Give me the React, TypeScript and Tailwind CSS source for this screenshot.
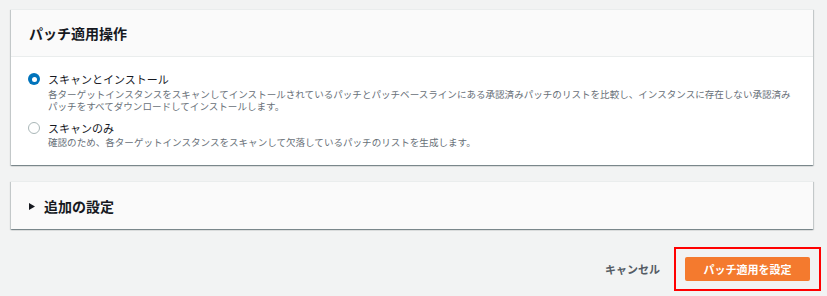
import React from "react";

const font = { fontFamily: '"Noto Sans CJK JP", "Noto Sans", sans-serif' };

function Radio({ checked }: { checked: boolean }) {
  return checked ? (
    <span className="mt-[1px] flex h-[12px] w-[12px] shrink-0 items-center justify-center rounded-full bg-[#0073bb]">
      <span className="h-[5px] w-[5px] rounded-full bg-white" />
    </span>
  ) : (
    <span className="mt-[1px] h-[12px] w-[12px] shrink-0 rounded-full border border-[#aab7b8] bg-white" />
  );
}

const cardShadow =
  "shadow-[0_1px_1px_0_rgba(0,28,36,0.3),1px_1px_1px_0_rgba(0,28,36,0.15),-1px_1px_1px_0_rgba(0,28,36,0.15)]";

export default function App() {
  return (
    <div
      className="h-[296px] w-[827px] bg-[#f2f3f3] pl-[11px] pt-[9px] text-[#16191f]"
      style={font}
    >
      <div className={`mr-[14px] bg-white ${cardShadow} border-t border-[#eaeded]`}>
        <div className="flex h-[47px] items-center border-b border-[#eaeded] bg-[#fafafa] pl-[18px]">
          <h2 className="text-[14px] font-bold leading-[20px]">パッチ適用操作</h2>
        </div>
        <div className="flex flex-col gap-[9px] pb-[17px] pl-[17px] pr-[18px] pt-[15px]">
          <div className="flex items-start gap-[8px]">
            <Radio checked />
            <div className="flex flex-col">
              <span className="text-[11px] leading-[14px]">スキャンとインストール</span>
              <span className="mt-[2px] text-[9.55px] leading-[12px] text-[#687078]">
                各ターゲットインスタンスをスキャンしてインストールされているパッチとパッチベースラインにある承認済みパッチのリストを比較し、インスタンスに存在しない承認済みパッチをすべてダウンロードしてインストールします。
              </span>
            </div>
          </div>
          <div className="flex items-start gap-[8px]">
            <Radio checked={false} />
            <div className="flex flex-col">
              <span className="text-[11px] leading-[14px]">スキャンのみ</span>
              <span className="mt-[1px] text-[9.55px] leading-[12px] text-[#687078]">
                確認のため、各ターゲットインスタンスをスキャンして欠落しているパッチのリストを生成します。
              </span>
            </div>
          </div>
        </div>
      </div>

      <div className={`mr-[14px] mt-[16px] flex h-[48px] items-center border-t border-[#eaeded] bg-[#fafafa] pl-[18px] ${cardShadow}`}>
        <svg width="6" height="7" viewBox="0 0 6 7" className="mt-[1px]">
          <path d="M0 0 L6 3.5 L0 7 Z" fill="#16191f" />
        </svg>
        <span className="ml-[9px] text-[14px] font-bold leading-[20px]">追加の設定</span>
      </div>

      <div className="mr-[6px] mt-[18px] flex items-center justify-end gap-[14px]">
        <button className="text-[11px] font-bold leading-[14px] text-[#545b64]">キャンセル</button>
        <div className="border-2 border-[#ff0000] px-[9px] py-[8px]">
          <button className="flex h-[24px] w-[125px] items-center justify-center rounded-[2px] bg-[#f47a2e] text-[11px] font-bold text-white">
            パッチ適用を設定
          </button>
        </div>
      </div>
    </div>
  );
}
